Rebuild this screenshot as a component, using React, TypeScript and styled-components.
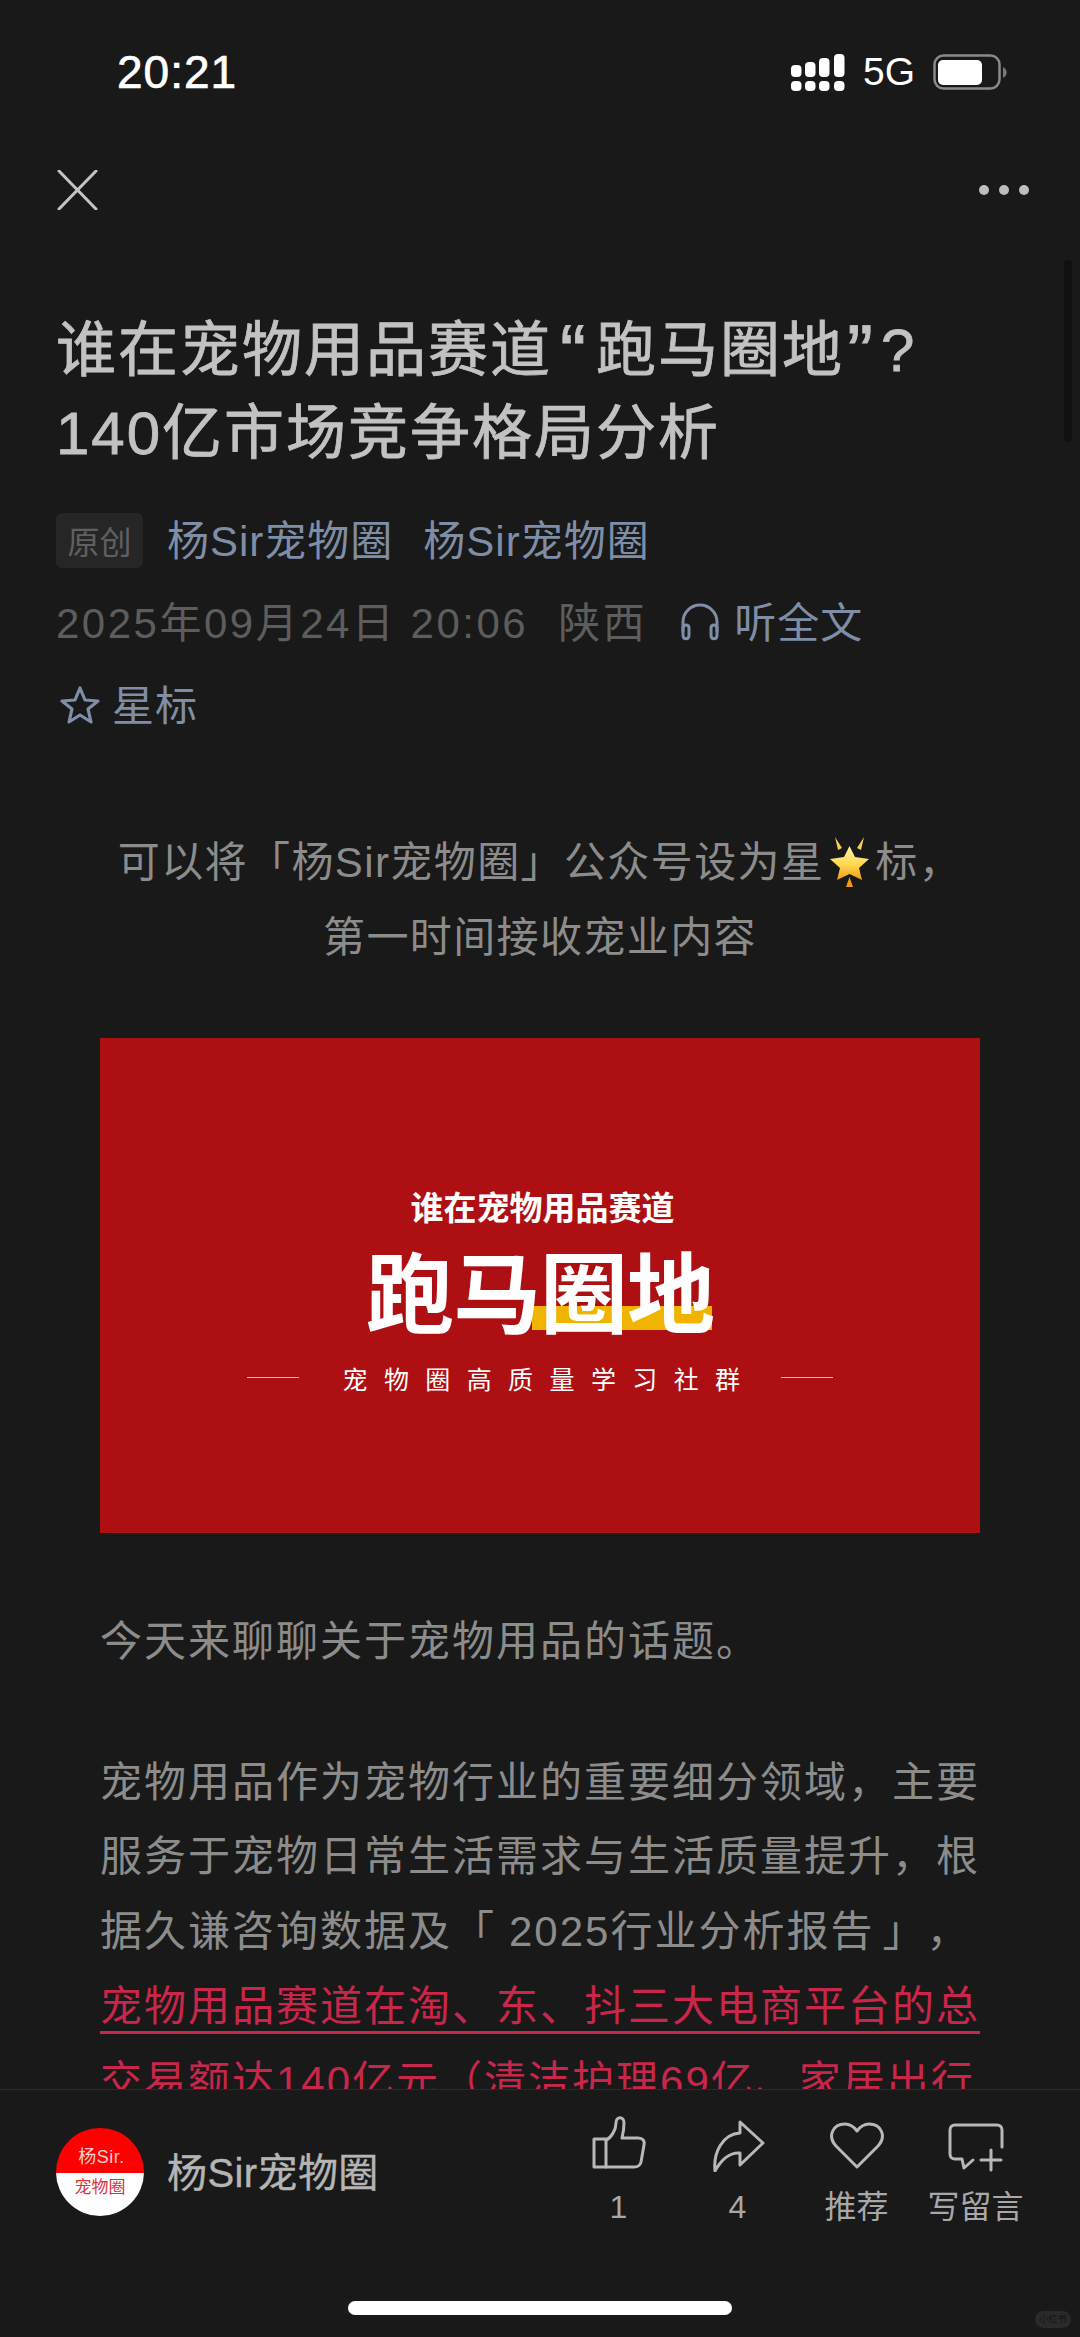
import React from "react";
import styled, { createGlobalStyle } from "styled-components";

const FONT = `"Liberation Sans", "Noto Sans CJK SC", sans-serif`;

const GlobalStyle = createGlobalStyle`
  html, body {
    margin: 0;
    padding: 0;
    background: #191919;
  }
  * {
    box-sizing: border-box;
  }
`;

const Page = styled.div`
  position: relative;
  width: 1080px;
  height: 2337px;
  overflow: hidden;
  background: #191919;
  font-family: ${FONT};
  text-spacing-trim: space-all;
`;

const StatusBar = styled.div`
  display: flex;
  justify-content: space-between;
  align-items: center;
  height: 150px;
  padding: 0 72px 6px 117px;
`;

const Clock = styled.div`
  font-size: 46px;
  letter-spacing: 1px;
  color: #fff;
  -webkit-text-stroke: 0.7px #fff;
`;

const StatusIcons = styled.div`
  display: flex;
  align-items: center;
  gap: 18px;
`;

const Network = styled.span`
  font-size: 39px;
  color: #fff;
`;

const TopBar = styled.div`
  display: flex;
  justify-content: space-between;
  align-items: center;
  height: 80px;
  padding: 0 51px 0 57px;
`;

const Article = styled.div`
  padding: 0 56px;
`;

const Title = styled.h1`
  margin: 79px 0 0;
  font-size: 60px;
  line-height: 83px;
  font-weight: 400;
  color: #c2c2c2;
  letter-spacing: 2px;
  white-space: nowrap;
  -webkit-text-stroke: 0.8px #c2c2c2;
`;

const QuoteMark = styled.span<{ $before: number; $after: number }>`
  margin: 0 ${(p) => p.$after}px 0 ${(p) => p.$before}px;
  font-size: 78px;
  line-height: 0;
  vertical-align: -8px;
`;

const AuthorRow = styled.div`
  display: flex;
  align-items: center;
  height: 56px;
  margin-top: 37px;
`;

const Badge = styled.span`
  display: flex;
  align-items: center;
  justify-content: center;
  width: 87px;
  height: 55px;
  margin-right: 24px;
  border-radius: 6px;
  background: #262626;
  color: #606060;
  font-size: 32px;
`;

const LinkText = styled.span<{ $gap?: number }>`
  margin-right: ${(p) => p.$gap ?? 0}px;
  padding-bottom: 6px;
  font-size: 42px;
  letter-spacing: 1px;
  color: #7f8ea6;
`;

const MetaRow = styled.div`
  display: flex;
  align-items: center;
  height: 56px;
  margin-top: 26px;
`;

const MetaText = styled.span<{ $gap?: number }>`
  margin-right: ${(p) => p.$gap ?? 0}px;
  padding-bottom: 6px;
  font-size: 42px;
  letter-spacing: 2.5px;
  color: #5d5d5d;
`;

const StarRow = styled.div`
  display: flex;
  align-items: center;
  gap: 12px;
  height: 56px;
  margin-top: 27px;
  padding-left: 4px;
`;

const Intro = styled.div`
  margin-top: 92px;
  text-align: center;
  font-size: 42px;
  line-height: 75px;
  letter-spacing: 1.4px;
  color: #8c8c8c;
`;

const Emoji = styled.svg`
  width: 47px;
  height: 50px;
  margin: 0 2px;
  vertical-align: -10px;
`;

const Content = styled.div`
  padding: 0 98px 0 100px;
`;

const Cover = styled.div`
  display: flex;
  flex-direction: column;
  align-items: center;
  width: 880px;
  height: 495px;
  margin-top: 63px;
  padding-top: 149px;
  background: #ae0f13;
  color: #fff;
`;

const CoverSub = styled.div`
  margin-left: 5px;
  font-size: 33px;
  line-height: 44px;
  font-weight: 700;
`;

const CoverHeadline = styled.div`
  position: relative;
  margin-top: 14px;
  font-size: 88px;
  line-height: 102px;
  font-weight: 700;
  letter-spacing: -1px;
  isolation: isolate;
  &::before {
    content: "";
    position: absolute;
    z-index: -1;
    left: 166px;
    right: 2px;
    bottom: 17px;
    height: 24px;
    background: #f0b400;
  }
`;

const CoverFoot = styled.div`
  display: flex;
  align-items: center;
  margin-top: 13px;
  font-size: 25px;
  line-height: 40px;
  letter-spacing: 16.4px;
`;

const CoverLine = styled.span<{ $right?: boolean }>`
  width: 52px;
  height: 1px;
  margin: ${(p) => (p.$right ? "-6px 0 0 24px" : "-6px 43px 0 0")};
  background: #e8b8b8;
`;

const Para = styled.p<{ $top: number }>`
  margin: ${(p) => p.$top}px 0 0;
  font-size: 42px;
  line-height: 74.7px;
  letter-spacing: 2px;
  white-space: nowrap;
  color: #8c8c8c;
`;

const ReportName = styled.span`
  margin: 0 8px 0 13px;
`;

const Marked = styled.span`
  color: #c8264a;
  border-bottom: 3px solid #c8264a;
  padding-bottom: 1px;
`;

const Red = styled.span`
  color: #c8264a;
`;

const Footer = styled.div`
  position: absolute;
  left: 0;
  right: 0;
  top: 2089px;
  bottom: 0;
  display: flex;
  align-items: flex-start;
  padding: 38px 0 0 56px;
  background: #191919;
  border-top: 1px solid #2a2a2a;
`;

const Avatar = styled.div`
  display: flex;
  flex-direction: column;
  flex-shrink: 0;
  width: 88px;
  height: 88px;
  border-radius: 50%;
  overflow: hidden;
  text-align: center;
`;

const AvatarTop = styled.div`
  height: 45px;
  padding: 18px 0 0 3px;
  background: #ff0000;
  color: #f7d0d0;
  font-size: 18px;
  line-height: 22px;
  letter-spacing: 0.5px;
`;

const AvatarBottom = styled.div`
  flex: 1;
  padding-top: 4px;
  background: #fff;
  color: #d8333a;
  font-size: 17px;
  line-height: 22px;
`;

const FooterName = styled.div`
  flex: 1;
  margin: 21px 0 0 23px;
  font-size: 40px;
  line-height: 48px;
  letter-spacing: 0.4px;
  color: #b5b5b5;
  -webkit-text-stroke: 0.4px #b5b5b5;
`;

const Actions = styled.div`
  display: flex;
  margin: -12px 45px 0 0;
`;

const Action = styled.div`
  display: flex;
  flex-direction: column;
  align-items: center;
  width: 119px;
`;

const ActionIcon = styled.svg`
  width: 56px;
  height: 56px;
  fill: none;
  stroke: #b8b8b8;
  stroke-width: 3;
  stroke-linecap: round;
  stroke-linejoin: round;
`;

const ActionLabel = styled.span`
  margin-top: 14px;
  font-size: 32px;
  line-height: 42px;
  color: #a8a8a8;
`;

const HomeBar = styled.div`
  position: absolute;
  left: 348px;
  bottom: 22px;
  width: 384px;
  height: 14px;
  border-radius: 7px;
  background: #fff;
`;

const Watermark = styled.div`
  position: absolute;
  right: 9px;
  bottom: 9px;
  width: 36px;
  height: 17px;
  border-radius: 9px;
  background: #2a2a2a;
  color: #151515;
  font-size: 9px;
  line-height: 17px;
  text-align: center;
`;

const Scrollbar = styled.div`
  position: absolute;
  right: 8px;
  top: 260px;
  width: 8px;
  height: 182px;
  border-radius: 4px;
  background: #101010;
`;

const SignalIcon = () => (
  <svg width="54" height="37" viewBox="0 0 54 37" fill="#fff">
    <rect x="0" y="11" width="10.5" height="12" rx="4" />
    <rect x="0" y="27" width="10.5" height="10" rx="4" />
    <rect x="14" y="8" width="10.5" height="15" rx="4" />
    <rect x="14" y="27" width="10.5" height="10" rx="4" />
    <rect x="28" y="4" width="10.5" height="19" rx="4" />
    <rect x="28" y="27" width="10.5" height="10" rx="4" />
    <rect x="43" y="0" width="10.5" height="23" rx="4" />
    <rect x="43" y="27" width="10.5" height="10" rx="4" />
  </svg>
);

const BatteryIcon = () => (
  <svg width="75" height="36" viewBox="0 0 75 36">
    <rect x="1.5" y="1.5" width="65" height="33" rx="9" fill="none" stroke="#8a8a8a" strokeWidth="2.5" />
    <rect x="5" y="6" width="44" height="25" rx="5" fill="#fff" />
    <path d="M70 13 a6 6 0 0 1 0 11 z" fill="#777" />
  </svg>
);

const CloseIcon = () => (
  <svg width="41" height="40" viewBox="0 0 41 40" stroke="#c4c4c4" strokeWidth="3" strokeLinecap="round">
    <path d="M2 1 L39 39 M39 1 L2 39" />
  </svg>
);

const MoreIcon = () => (
  <svg width="50" height="12" viewBox="0 0 50 12" fill="#bdbdbd">
    <circle cx="5" cy="6" r="5" />
    <circle cx="25" cy="6" r="5" />
    <circle cx="45" cy="6" r="5" />
  </svg>
);

const HeadphoneIcon = () => (
  <svg width="40" height="38" viewBox="0 0 40 38" fill="none" stroke="#7f8ea6" strokeWidth="3" strokeLinecap="round" style={{ marginRight: 14 }}>
    <path d="M3 28 V19 a17 17 0 0 1 34 0 V28" />
    <path d="M3 25 c0 -4 6 -4 6 0 v7 c0 5 -6 5 -6 0 z" />
    <path d="M37 25 c0 -4 -6 -4 -6 0 v7 c0 5 6 5 6 0 z" />
  </svg>
);

const StarIcon = () => (
  <svg width="40" height="38" viewBox="0 0 40 38" fill="none" stroke="#7f8ea6" strokeWidth="3.2" strokeLinejoin="round">
    <path d="M20 2 L25 14 L38 15 L28 23 L31 36 L20 29 L9 36 L12 23 L2 15 L15 14 Z" />
  </svg>
);

const App: React.FC = () => {
  return (
    <Page>
      <GlobalStyle />
      <StatusBar>
        <Clock>20:21</Clock>
        <StatusIcons>
          <SignalIcon />
          <Network>5G</Network>
          <BatteryIcon />
        </StatusIcons>
      </StatusBar>
      <TopBar>
        <CloseIcon />
        <MoreIcon />
      </TopBar>
      <Article>
        <Title>
          谁在宠物用品赛道
          <QuoteMark $before={8} $after={8}>“</QuoteMark>
          跑马圈地
          <QuoteMark $before={3} $after={6}>”</QuoteMark>
          ?
          <br />
          140亿市场竞争格局分析
        </Title>
        <AuthorRow>
          <Badge>原创</Badge>
          <LinkText $gap={30}>杨Sir宠物圈</LinkText>
          <LinkText>杨Sir宠物圈</LinkText>
        </AuthorRow>
        <MetaRow>
          <MetaText $gap={30}>2025年09月24日 20:06</MetaText>
          <MetaText $gap={33}>陕西</MetaText>
          <HeadphoneIcon />
          <LinkText>听全文</LinkText>
        </MetaRow>
        <StarRow>
          <StarIcon />
          <LinkText>星标</LinkText>
        </StarRow>
      </Article>
      <Intro>
        可以将「杨Sir宠物圈」公众号设为星
        <Emoji viewBox="0 0 45 50">
          <defs>
            <linearGradient id="starFill" x1="0" y1="0" x2="0" y2="1">
              <stop offset="0" stopColor="#fff2a8" />
              <stop offset="0.55" stopColor="#ffd84f" />
              <stop offset="1" stopColor="#f09a10" />
            </linearGradient>
          </defs>
          <path d="M22.5 9 L28 20 L42 22 L32 31 L35 43 L22.5 37 L10 43 L13 31 L3 22 L17 20 Z" fill="url(#starFill)" />
          <path d="M8 0 L15 11 L11 13 Z M37 0 L30 11 L34 13 Z" fill="#f7cf55" />
          <path d="M22.5 40 L26 50 L19 50 Z" fill="#f09a10" />
        </Emoji>
        标，
        <br />
        第一时间接收宠业内容
      </Intro>
      <Content>
        <Cover>
          <CoverSub>谁在宠物用品赛道</CoverSub>
          <CoverHeadline>跑马圈地</CoverHeadline>
          <CoverFoot>
            <CoverLine />
            宠物圈高质量学习社群
            <CoverLine $right />
          </CoverFoot>
        </Cover>
        <Para $top={72}>今天来聊聊关于宠物用品的话题。</Para>
        <Para $top={66}>
          宠物用品作为宠物行业的重要细分领域，主要
          <br />
          服务于宠物日常生活需求与生活质量提升，根
          <br />
          据久谦咨询数据及「<ReportName>2025行业分析报告</ReportName>」，
          <br />
          <Marked>宠物用品赛道在淘、东、抖三大电商平台的总</Marked>
          <br />
          <Red>交易额达140亿元（清洁护理69亿、家居出行</Red>
        </Para>
      </Content>
      <Scrollbar />
      <Footer>
        <Avatar>
          <AvatarTop>杨Sir.</AvatarTop>
          <AvatarBottom>宠物圈</AvatarBottom>
        </Avatar>
        <FooterName>杨Sir宠物圈</FooterName>
        <Actions>
          <Action>
            <ActionIcon viewBox="0 0 56 56">
              <path d="M3 23 H15 V51 H3 Z" />
              <path d="M15 24 C20 22 25 14 25 7 C25 0 33 0 33 7 C33 12 32 18 31 22 H47 C52 22 54 25 53 29 L50 46 C49 50 47 51 43 51 H15" />
            </ActionIcon>
            <ActionLabel>1</ActionLabel>
          </Action>
          <Action>
            <ActionIcon viewBox="0 0 56 56">
              <path d="M30 6 L53 27 L30 49 V37 C20 36 11 44 5 55 C3 36 13 18 30 17 Z" />
            </ActionIcon>
            <ActionLabel>4</ActionLabel>
          </Action>
          <Action>
            <ActionIcon viewBox="0 0 56 56">
              <path d="M28 51 L7 30 C-2 20 4 8 16 8 C21 8 25 11 28 15 C31 11 35 8 40 8 C52 8 58 20 49 30 Z" />
            </ActionIcon>
            <ActionLabel>推荐</ActionLabel>
          </Action>
          <Action>
            <ActionIcon viewBox="0 0 56 56">
              <path d="M54 31 V14 C54 11 52 9 49 9 H7 C4 9 2 11 2 14 V38 C2 41 4 43 7 43 H14 L16 52 L25 44" />
              <path d="M43 34 V54 M33 44 H53" />
            </ActionIcon>
            <ActionLabel>写留言</ActionLabel>
          </Action>
        </Actions>
      </Footer>
      <HomeBar />
      <Watermark>小红书</Watermark>
    </Page>
  );
};

export default App;
